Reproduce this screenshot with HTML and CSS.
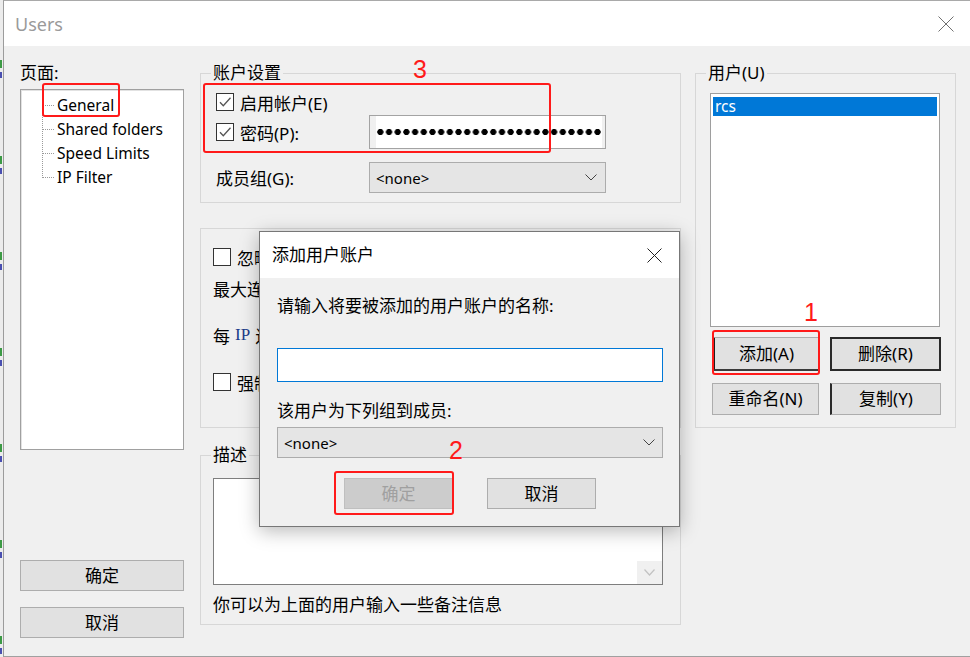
FILE: index.html
```html
<!DOCTYPE html>
<html lang="zh-CN">
<head>
<meta charset="utf-8">
<title>Users</title>
<link rel="stylesheet" href="styles.css">
</head>
<body>
<div class="screen">
  <div class="edge"></div>
  <div class="window">
    <div class="titlebar">
      <span class="title">Users</span>
      <svg class="win-close" width="16" height="16" viewBox="0 0 16 16"><path d="M0.5 0.5L15.5 15.5M15.5 0.5L0.5 15.5" stroke="#707070" stroke-width="1" fill="none"/></svg>
    </div>
    <div class="content">
      <div class="col-left">
        <div class="pane-label">页面:</div>
        <div class="tree">
          <ul class="tree-list">
            <li>General</li>
            <li>Shared folders</li>
            <li>Speed Limits</li>
            <li>IP Filter</li>
          </ul>
        </div>
        <div class="lbtns">
          <div class="btn">确定</div>
          <div class="btn">取消</div>
        </div>
      </div>

      <div class="col-mid">
        <fieldset class="group">
          <legend>账户设置</legend>
          <div class="gbody acct">
            <div class="row row1">
              <span class="cb"><svg width="16" height="16" viewBox="0 0 16 16"><path d="M3 8.2l3.3 3.6L13.5 3.8" fill="none" stroke="#555" stroke-width="1.3"/></svg></span>
              <span>启用帐户(E)</span>
            </div>
            <div class="row row-pwd">
              <div class="lbl-cell">
                <span class="cb"><svg width="16" height="16" viewBox="0 0 16 16"><path d="M3 8.2l3.3 3.6L13.5 3.8" fill="none" stroke="#555" stroke-width="1.3"/></svg></span>
                <span>密码(P):</span>
              </div>
              <div class="pwd"></div>
            </div>
            <div class="row row-grp">
              <div class="lbl-cell">成员组(G):</div>
              <div class="combo combo-main"><span class="combo-text">&lt;none&gt;</span><svg width="12" height="7" viewBox="0 0 12 7"><path d="M0.5 0.5L6 6L11.5 0.5" fill="none" stroke="#444" stroke-width="1"/></svg></div>
            </div>
          </div>
        </fieldset>

        <div class="group2">
          <div class="g2row"><span class="cb"></span><span>忽略服务器的用户数限制(B)</span></div>
          <div class="g2row g2-gap1">最大连接数(M):</div>
          <div class="g2row g2-gap2">每 <span class="ip">IP</span> 连接数限制(L):</div>
          <div class="g2row g2-gap2"><span class="cb"></span><span>强制使用 SSL 登录(S)</span></div>
        </div>

        <fieldset class="group memo-group">
          <legend>描述</legend>
          <div class="gbody memo-body">
            <div class="memo">
              <div class="sb"><div class="sb-btn"><svg width="11" height="7" viewBox="0 0 11 7"><path d="M0.5 0.5L5.5 6L10.5 0.5" fill="none" stroke="#c2c2c2" stroke-width="1.2"/></svg></div></div>
            </div>
            <div class="memo-hint">你可以为上面的用户输入一些备注信息</div>
          </div>
        </fieldset>
      </div>

      <div class="col-right">
        <fieldset class="group">
          <legend>用户(U)</legend>
          <div class="gbody users">
            <div class="listbox">
              <div class="list-item selected">rcs</div>
            </div>
            <div class="ubtns">
              <div class="btn ubtn add">添加(A)</div>
              <div class="btn ubtn del">删除(R)</div>
              <div class="btn ubtn">重命名(N)</div>
              <div class="btn ubtn copy">复制(Y)</div>
            </div>
          </div>
        </fieldset>
      </div>
    </div>
  </div>

  <div class="dialog">
    <div class="dlg-title">
      <span>添加用户账户</span>
      <svg width="15" height="15" viewBox="0 0 15 15"><path d="M0.5 0.5L14.5 14.5M14.5 0.5L0.5 14.5" stroke="#222" stroke-width="1" fill="none"/></svg>
    </div>
    <div class="dlg-body">
      <div class="dlg-text">请输入将要被添加的用户账户的名称:</div>
      <div class="dlg-input"></div>
      <div class="dlg-text dlg-text2">该用户为下列组到成员:</div>
      <div class="combo combo-dlg"><span class="combo-text">&lt;none&gt;</span><svg width="12" height="7" viewBox="0 0 12 7"><path d="M0.5 0.5L6 6L11.5 0.5" fill="none" stroke="#444" stroke-width="1"/></svg></div>
      <div class="dlg-btns">
        <div class="btn dlg-btn disabled">确定</div>
        <div class="btn dlg-btn">取消</div>
      </div>
    </div>
  </div>

  <div class="mark mark-general"></div>
  <div class="mark mark-acct"></div>
  <div class="mark mark-add"></div>
  <div class="mark mark-ok"></div>
  <div class="num num3">3</div>
  <div class="num num1">1</div>
  <div class="num num2">2</div>
</div>
</body>
</html>
```

FILE: styles.css
```css
* { box-sizing: border-box; }

body {
  margin: 0;
  font-family: "Noto Sans", "Noto Sans CJK SC", sans-serif;
  font-size: 17px;
  color: #000;
  background: #f0f0f0;
}

.screen {
  position: relative;
  width: 970px;
  height: 657px;
  display: flex;
  overflow: hidden;
}

.edge {
  width: 3px;
  background-color: #ececec;
  background-image: repeating-linear-gradient(180deg, transparent 0 60px, #3c9a45 60px 68px, transparent 68px 72px, #4a4fb0 72px 78px, transparent 78px 96px);
  background-size: 2px 100%;
  background-repeat: no-repeat;
}

.window {
  flex: 1;
  display: flex;
  flex-direction: column;
  border-left: 1px solid #9c9c9c;
  border-top: 1px solid #a9a9a9;
  border-bottom: 1px solid #a0a0a0;
  background: #f0f0f0;
}

.titlebar {
  height: 45px;
  flex: none;
  background: #fff;
  display: flex;
  align-items: center;
  justify-content: space-between;
  padding: 0 16px 0 11px;
}

.title {
  font-size: 18px;
  color: #9a9a9a;
  line-height: 1;
}

.content {
  flex: 1;
  display: flex;
  padding: 17px 0 0 16px;
}

/* left column */
.col-left {
  width: 164px;
  display: flex;
  flex-direction: column;
}

.pane-label {
  line-height: 20px;
  height: 20px;
}

.tree {
  margin-top: 6px;
  height: 361px;
  border: 1px solid #a0a0a0;
  box-shadow: inset 1px 1px 0 #e2e2e2;
  background: #fff;
  padding: 3px 0 0 21px;
}

.tree-list {
  list-style: none;
  margin: 0;
  padding: 0;
  position: relative;
}

.tree-list::before {
  content: "";
  position: absolute;
  left: 0;
  top: 12px;
  bottom: 11px;
  border-left: 1px dotted #9a9a9a;
}

.tree-list li {
  height: 24px;
  display: flex;
  align-items: center;
  font-size: 15.5px;
  white-space: nowrap;
}

.tree-list li::before {
  content: "";
  width: 12px;
  border-top: 1px dotted #9a9a9a;
  margin-right: 3px;
}

.lbtns {
  margin-top: 110px;
  display: flex;
  flex-direction: column;
  gap: 16px;
}

.btn {
  height: 31px;
  background: #e1e1e1;
  border: 1px solid #adadad;
  display: flex;
  align-items: center;
  justify-content: center;
  line-height: 20px;
  white-space: nowrap;
}

/* middle column */
.col-mid {
  width: 481px;
  margin-left: 16px;
  display: flex;
  flex-direction: column;
}

.group {
  margin: 0;
  padding: 0;
  min-width: 0;
  border: 1px solid #d7d7d7;
}

.group legend {
  margin-left: 10px;
  padding: 0 2px;
  line-height: 20px;
  height: 20px;
}

.acct {
  padding: 9px 0 9px 15px;
}

.row {
  display: flex;
  align-items: center;
  white-space: nowrap;
}

.row1 { height: 20px; }

.row-pwd {
  height: 34px;
  margin-top: 3px;
}

.row-grp {
  height: 31px;
  margin-top: 13px;
}

.lbl-cell {
  width: 153px;
  display: flex;
  align-items: center;
}

.cb {
  width: 18px;
  height: 18px;
  flex: none;
  border: 1px solid #333;
  background: #fff;
  margin-right: 6px;
  display: inline-flex;
  align-items: center;
  justify-content: center;
}

.pwd {
  width: 237px;
  height: 34px;
  border: 1px solid #a3a3a3;
  background-color: #fff;
  background-image: radial-gradient(circle, #000 0 2.8px, transparent 3.4px);
  background-size: 8.7px 100%;
  background-repeat: repeat-x;
  background-position: 0 0;
  background-origin: content-box;
  background-clip: content-box;
  padding: 0 3px 0 6px;
}

.combo {
  height: 31px;
  background: #e5e5e5;
  border: 1px solid #acacac;
  display: flex;
  align-items: center;
  justify-content: space-between;
  padding: 0 8px 0 6px;
}

.combo-main { width: 237px; }

.combo-text {
  font-size: 15px;
  line-height: 20px;
}

.group2 {
  margin-top: 25px;
  height: 200px;
  border: 1px solid #d7d7d7;
  padding: 18px 0 0 12px;
}

.g2row {
  height: 20px;
  display: flex;
  align-items: center;
  white-space: nowrap;
}

.g2-gap1 { margin-top: 11px; }
.g2-gap2 { margin-top: 27px; }

.ip {
  font-family: "Liberation Serif", serif;
  color: #1a3c8a;
  margin: 0 5px;
}

.memo-group {
  margin-top: 17px;
}

.memo-body {
  padding: 13px 17px 9px 12px;
}

.memo {
  height: 107px;
  border: 1px solid #7e7e7e;
  background: #fff;
  display: flex;
  justify-content: flex-end;
}

.sb {
  width: 25px;
  display: flex;
  flex-direction: column;
  justify-content: flex-end;
}

.sb-btn {
  height: 23px;
  background: #f0f0f0;
  display: flex;
  align-items: center;
  justify-content: center;
}

.memo-hint {
  margin-top: 10px;
  line-height: 20px;
  height: 20px;
  white-space: nowrap;
}

/* right column */
.col-right {
  width: 261px;
  margin-left: 14px;
}

.users {
  padding: 10px 15px 12px 14px;
}

.listbox {
  height: 234px;
  width: 230px;
  border: 1px solid #9e9e9e;
  background: #fff;
  padding: 3px 2px;
}

.list-item {
  height: 19px;
  line-height: 19px;
  padding-left: 2px;
  font-size: 15.5px;
}

.list-item.selected {
  background: #0078d7;
  color: #fff;
}

.ubtns {
  margin-top: 10px;
  margin-left: 2px;
  display: grid;
  grid-template-columns: 107px 111px;
  grid-template-rows: 34px 32px;
  column-gap: 11px;
  row-gap: 12px;
}

.ubtn { height: auto; }

.add {
  border-left: 3px solid #1e1e1e;
  border-bottom: 2px solid #3a3a3a;
}

.del {
  border: 2px solid #2a2a2a;
}

.copy {
  border-left: 2px solid #2a2a2a;
}

/* dialog */
.dialog {
  position: absolute;
  left: 259px;
  top: 231px;
  width: 421px;
  height: 296px;
  border: 1px solid #777;
  background: #f0f0f0;
  box-shadow: 0 4px 18px rgba(0, 0, 0, 0.28);
  display: flex;
  flex-direction: column;
}

.dlg-title {
  height: 46px;
  flex: none;
  background: #fff;
  display: flex;
  align-items: center;
  justify-content: space-between;
  padding: 0 17px 0 12px;
  line-height: 20px;
}

.dlg-body {
  padding: 18px 16px 0 17px;
}

.dlg-text {
  line-height: 20px;
  height: 20px;
  white-space: nowrap;
}

.dlg-input {
  margin-top: 32px;
  height: 34px;
  border: 1px solid #0078d7;
  background: #fff;
}

.dlg-text2 { margin-top: 19px; }

.combo-dlg {
  margin-top: 6px;
  padding: 0 7px 0 6px;
}

.dlg-btns {
  margin-top: 20px;
  display: flex;
  justify-content: center;
  gap: 34px;
}

.dlg-btn { width: 109px; }

.dlg-btn.disabled {
  background: #cccccc;
  border-color: #bfbfbf;
  color: #a0a0a0;
}

/* annotations */
.mark {
  position: absolute;
  border: 2px solid #ff1a1a;
  border-radius: 3px;
}

.mark-general { left: 42px; top: 83px; width: 78px; height: 34px; }
.mark-acct { left: 203px; top: 83px; width: 348px; height: 70px; }
.mark-add { left: 712px; top: 330px; width: 108px; height: 45px; }
.mark-ok { left: 334px; top: 471px; width: 120px; height: 44px; }

.num {
  position: absolute;
  font-family: "Liberation Sans", sans-serif;
  font-size: 25px;
  line-height: 25px;
  color: #ff1a1a;
}

.num3 { left: 413px; top: 57px; }
.num1 { left: 804px; top: 300px; }
.num2 { left: 449px; top: 438px; }
```
